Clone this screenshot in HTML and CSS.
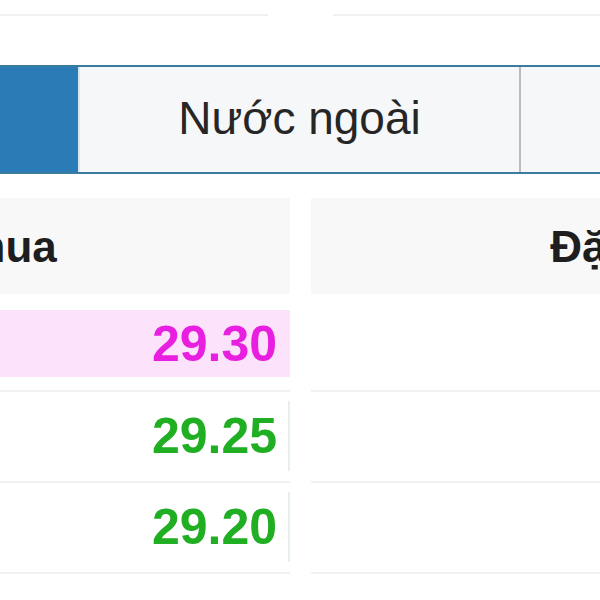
FILE: index.html
```html
<!DOCTYPE html>
<html lang="vi">
  <head>
    <meta charset="UTF-8" />
    <meta name="viewport" content="width=device-width, initial-scale=1.0" />
    <title>Sổ lệnh</title>
    <link rel="stylesheet" href="styles.css">
  </head>
  <body>
    <div class="topline">
      <span class="seg seg-left"></span>
      <span class="seg seg-right"></span>
    </div>

    <nav class="tabs">
      <div class="tab active">Trong nước</div>
      <div class="tab">Nước ngoài</div>
      <div class="tab">Tự doanh</div>
    </nav>

    <section class="book">
      <div class="head">Giá mua</div>
      <div class="head">Đặt bán</div>

      <div class="cell"><div class="val ceil">29.30</div></div>
      <div class="cell"><div class="val empty"></div></div>

      <div class="cell"><div class="val up">29.25</div></div>
      <div class="cell"><div class="val empty"></div></div>

      <div class="cell"><div class="val up">29.20</div></div>
      <div class="cell"><div class="val empty"></div></div>
    </section>
  </body>
</html>
```

FILE: styles.css
```css
body {
  margin: 0;
  background: #fff;
  font-family: "Liberation Sans", Arial, sans-serif;
  color: #262626;
  overflow: hidden;
}

.topline {
  display: flex;
  justify-content: space-between;
  padding-top: 14px;
}
.seg {
  display: block;
  height: 2px;
  background: #f1f1f1;
}
.seg-left { width: 268px; }
.seg-right { width: 267px; }

/* tab bar, first tab runs off the left edge */
.tabs {
  display: flex;
  margin: 49px 0 0 -361px;
  width: 1400px;
  border-top: 2px solid #3a7ba0;
  border-bottom: 2px solid #3a7ba0;
}
.tab {
  flex: none;
  width: 441px;
  height: 105px;
  display: flex;
  align-items: center;
  justify-content: center;
  background: #f6f7f8;
  font-size: 46px;
  padding-bottom: 4px;
  box-sizing: border-box;
}
.tab.active {
  background: #2a7bb6;
  color: #fff;
  border-right: 2px solid #d8e8f2;
}
.tab:nth-child(2) {
  border-right: 2px solid #bcbcbc;
}

/* order book */
.book {
  display: grid;
  grid-template-columns: 640px 640px;
  column-gap: 21px;
  margin: 24px 0 0 -350px;
}
.head {
  height: 96px;
  display: flex;
  align-items: center;
  justify-content: center;
  background: #f8f8f8;
  font-weight: bold;
  font-size: 44px;
  color: #1e1e1e;
  padding-top: 2px;
  box-sizing: border-box;
}
.cell {
  padding: 9px 0 10px;
  border-bottom: 2px solid #f1f1f1;
}
.head + .head + .cell,
.head + .head + .cell + .cell {
  padding-top: 16px;
}
.val {
  height: 70px;
  display: flex;
  align-items: center;
  justify-content: flex-end;
  padding-right: 11px;
  font-weight: bold;
  font-size: 50px;
  border-right: 2px solid #e8f0ea;
}
.val.empty {
  border-right: none;
}
.ceil {
  height: 67px;
  background: #fde2fb;
  color: #e81ee0;
  border-right-color: #fde2fb;
}
.up {
  color: #20ae22;
}
```
